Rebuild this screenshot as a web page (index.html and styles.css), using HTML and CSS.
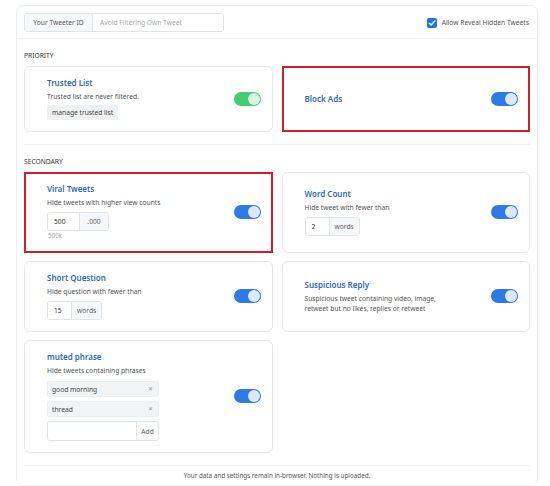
FILE: index.html
```html
<!DOCTYPE html>
<html lang="en">
<head>
<meta charset="UTF-8">
<meta name="viewport" content="width=device-width, initial-scale=1.0">
<title>Tweet Filter Settings</title>
<link rel="stylesheet" href="styles.css">
</head>
<body>
<div class="panel">
  <div class="topbar">
    <div class="id-group">
      <span class="addon id-label">Your Tweeter ID</span>
      <input class="id-input" type="text" placeholder="Avoid Filtering Own Tweet">
    </div>
    <label class="reveal">
      <span class="check"><svg viewBox="0 0 10 10" width="10" height="10"><path d="M2.3 5.2 L4.2 7 L7.8 3" fill="none" stroke="#fff" stroke-width="1.5" stroke-linecap="round" stroke-linejoin="round"/></svg></span>
      Allow Reveal Hidden Tweets
    </label>
  </div>

  <div class="group">
    <div class="group-title">PRIORITY</div>
    <div class="cards">
      <div class="card">
        <div class="card-body">
          <div class="card-title">Trusted List</div>
          <div class="card-desc">Trusted list are never filtered.</div>
          <button class="small-btn">manage trusted list</button>
        </div>
        <div class="switch green"><span class="knob"></span></div>
      </div>
      <div class="card marked">
        <div class="card-body">
          <div class="card-title">Block Ads</div>
        </div>
        <div class="switch"><span class="knob"></span></div>
      </div>
    </div>
  </div>

  <div class="group">
    <div class="group-title">SECONDARY</div>
    <div class="cards">
      <div class="card marked">
        <div class="card-body">
          <div class="card-title">Viral Tweets</div>
          <div class="card-desc">Hide tweets with higher view counts</div>
          <div class="field">
            <input class="num views" type="text" value="500">
            <span class="addon">.000</span>
          </div>
          <div class="hint">500k</div>
        </div>
        <div class="switch"><span class="knob"></span></div>
      </div>
      <div class="card">
        <div class="card-body">
          <div class="card-title">Word Count</div>
          <div class="card-desc">Hide tweet with fewer than</div>
          <div class="field">
            <input class="num" type="text" value="2">
            <span class="addon">words</span>
          </div>
        </div>
        <div class="switch"><span class="knob"></span></div>
      </div>
      <div class="card">
        <div class="card-body">
          <div class="card-title">Short Question</div>
          <div class="card-desc">Hide question with fewer than</div>
          <div class="field">
            <input class="num" type="text" value="15">
            <span class="addon">words</span>
          </div>
        </div>
        <div class="switch"><span class="knob"></span></div>
      </div>
      <div class="card">
        <div class="card-body">
          <div class="card-title">Suspicious Reply</div>
          <div class="card-desc">Suspicious tweet containing video, image,<br>retweet but no likes, replies or retweet</div>
        </div>
        <div class="switch"><span class="knob"></span></div>
      </div>
      <div class="card">
        <div class="card-body">
          <div class="card-title">muted phrase</div>
          <div class="card-desc">Hide tweets containing phrases</div>
          <div class="phrases">
            <div class="phrase"><span>good morning</span><span class="remove">&#x2715;</span></div>
            <div class="phrase"><span>thread</span><span class="remove">&#x2715;</span></div>
            <div class="field add-field">
              <input class="phrase-input" type="text">
              <span class="addon">Add</span>
            </div>
          </div>
        </div>
        <div class="switch"><span class="knob"></span></div>
      </div>
    </div>
  </div>

  <div class="footer">Your data and settings remain in-browser. Nothing is uploaded.</div>
</div>
</body>
</html>
```

FILE: styles.css
```css
* {
    box-sizing: border-box;
}

body {
    margin: 0;
    background: #fff;
    font-family: "Noto Sans", "Open Sans", sans-serif;
    font-size: 7px;
    color: #444;
}

.panel {
    margin: 5px 0 0 16px;
    width: 522px;
    height: 481px;
    border: 1px solid #eceef1;
    border-radius: 7px;
}

/* barra superior */
.topbar {
    display: flex;
    justify-content: space-between;
    align-items: center;
    padding: 7px 8px 6px 7px;
    border-bottom: 1px solid #eef0f2;
}

.id-group {
    display: flex;
    height: 19px;
    width: 200px;
    border: 1px solid #e1e4e8;
    border-radius: 3px;
    overflow: hidden;
}

.addon {
    display: flex;
    align-items: center;
    justify-content: center;
    background: #f6f7f9;
    color: #666;
    font-size: 6.7px;
}

.id-label {
    width: 68px;
    border-right: 1px solid #e1e4e8;
    color: #555;
}

.id-input {
    flex: 1;
    min-width: 0;
    border: none;
    outline: none;
    padding: 0 7px;
    font-family: inherit;
    font-size: 6.7px;
}

.id-input::placeholder {
    color: #aaa;
}

.reveal {
    display: flex;
    align-items: center;
    gap: 5px;
    font-size: 6.7px;
    color: #555;
}

.check {
    display: flex;
    width: 10px;
    height: 10px;
    border-radius: 2px;
    background: #1a73e8;
}

/* grupos */
.group {
    margin: 0 7px;
    padding: 12px 0;
    border-bottom: 1px solid #eef0f2;
}

.group-title {
    font-size: 6.7px;
    line-height: 10px;
    color: #333;
    margin-bottom: 5px;
}

.cards {
    display: grid;
    grid-template-columns: 1fr 1fr;
    column-gap: 9px;
    row-gap: 8px;
}

.card {
    display: flex;
    align-items: center;
    justify-content: space-between;
    padding: 10px 11px 11px 22px;
    border: 1px solid #e6e8eb;
    border-radius: 6px;
}

.card.marked {
    border: 2px solid #cf2027;
    border-radius: 0;
    padding: 9px 10px 10px 21px;
}

.card-title {
    font-size: 8px;
    line-height: 12px;
    font-weight: 600;
    color: #2d6bb4;
}

.card-desc {
    margin-top: 3px;
    font-size: 6.7px;
    line-height: 10px;
    color: #555;
}

.small-btn {
    display: block;
    margin-top: 3px;
    padding: 0 5px;
    height: 15px;
    border: none;
    border-radius: 2px;
    background: #f0f1f3;
    font-family: inherit;
    font-size: 6.7px;
    color: #444;
}

.field {
    display: flex;
    margin-top: 4px;
    height: 19px;
    width: max-content;
    border: 1px solid #e1e4e8;
    border-radius: 3px;
    overflow: hidden;
}

.field .addon {
    min-width: 29px;
    padding: 0 5px;
    border-left: 1px solid #e1e4e8;
}

.num {
    width: 23px;
    border: none;
    outline: none;
    padding: 0 0 0 6px;
    font-family: inherit;
    font-size: 6.7px;
    color: #333;
}

.num.views {
    width: 31px;
}

.hint {
    font-size: 6.3px;
    line-height: 10px;
    color: #aaa;
    padding-left: 1px;
}

.phrases {
    width: 112px;
    margin-top: 5px;
    display: flex;
    flex-direction: column;
    gap: 4px;
}

.phrase {
    display: flex;
    justify-content: space-between;
    align-items: center;
    height: 16px;
    padding: 0 5px 0 4px;
    background: #f2f3f5;
    border: 1px solid #eceef0;
    border-radius: 2px;
    font-size: 6.7px;
    color: #444;
}

.remove {
    font-size: 6px;
    color: #999;
}

.add-field {
    margin-top: 0;
    width: 112px;
    height: 20px;
}

.phrase-input {
    flex: 1;
    min-width: 0;
    border: none;
    outline: none;
}

.add-field .addon {
    min-width: 22px;
    padding: 0;
    background: #fbfbfc;
}

/* interruptor */
.switch {
    position: relative;
    flex: none;
    width: 27px;
    height: 14px;
    border-radius: 7px;
    background: #2c7be5;
}

.switch.green {
    background: #45cc73;
}

.knob {
    position: absolute;
    top: 1px;
    right: 1px;
    width: 12px;
    height: 12px;
    border-radius: 50%;
    background: #dde9fa;
}

.switch.green .knob {
    background: #dbf5e3;
}

.footer {
    text-align: center;
    font-size: 6.3px;
    line-height: 20px;
    color: #555;
}
```
